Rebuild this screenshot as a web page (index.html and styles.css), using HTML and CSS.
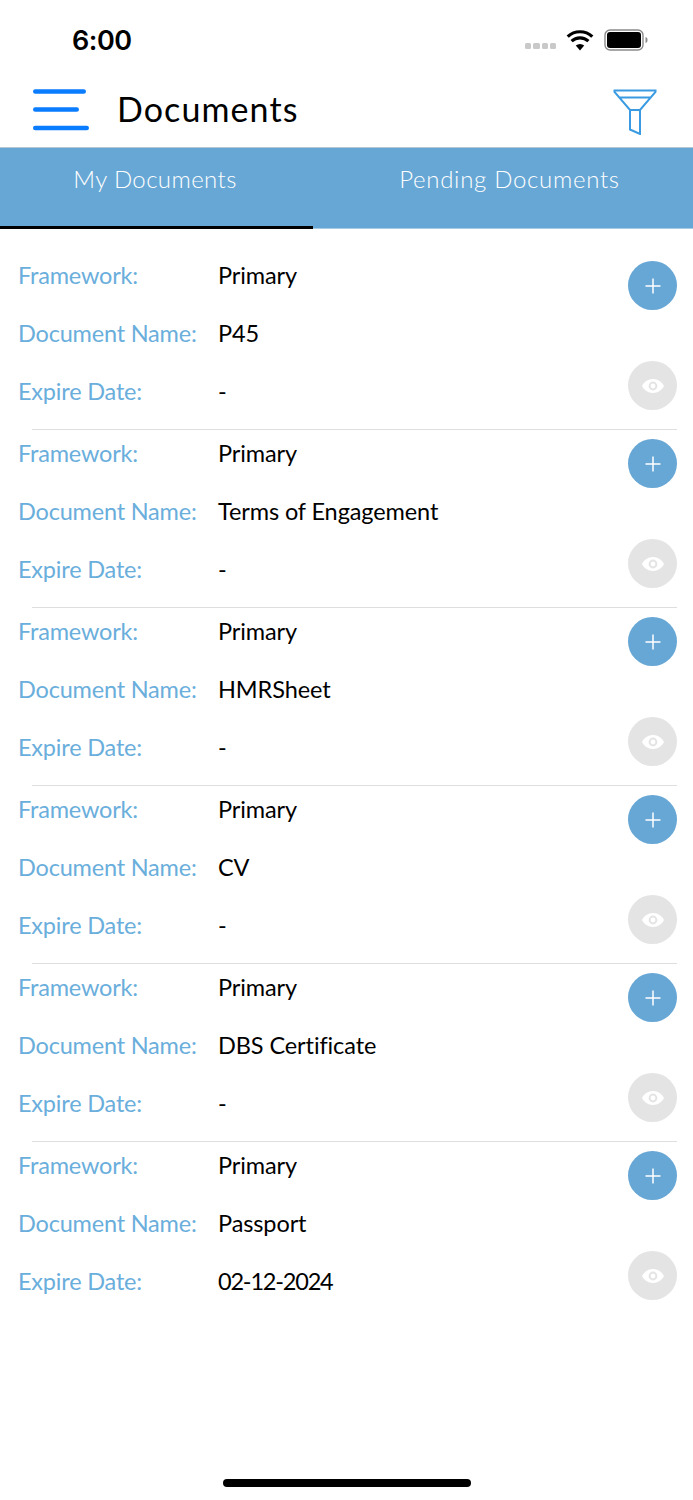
FILE: index.html
```html
<!DOCTYPE html>
<html lang="en">
<head>
<meta charset="utf-8">
<title>Documents</title>
<link rel="stylesheet" href="styles.css">
</head>
<body>
<div class="app">
  <div class="status">
    <span class="time">6:00</span>
    <div class="status-icons">
      <div class="dots"><i></i><i></i><i></i><i></i></div>
      <svg class="wifi" width="28" height="21" viewBox="0 0 28 21"><path d="M14 20.500 9.800 15.600a6.400 6.400 0 0 1 8.400 0z" fill="#000"/><path d="M5.600 11.200a12.200 12.200 0 0 1 16.800 0M1.700 6.600a18 18 0 0 1 24.600 0" fill="none" stroke="#000" stroke-width="3.200"/></svg>
      <svg class="battery" width="45" height="22" viewBox="0 0 45 22"><rect x="1" y="1" width="38" height="20" rx="5" fill="#fff" stroke="#8a8a8a" stroke-width="1.400"/><rect x="3" y="3" width="34" height="16" rx="3" fill="#000"/><path d="M41.500 8c1.600.3 2 1.500 2 3s-.4 2.700-2 3z" fill="#8a8a8a"/></svg>
    </div>
  </div>
  <header class="topbar">
    <svg class="menu" width="58" height="48" viewBox="0 0 58 48"><g stroke="#0a7cff" stroke-width="4.600" stroke-linecap="round"><path d="M3.300 5.500h48.400M3.300 23.500h41.400M3.300 42h51.400"/></g></svg>
    <h1 class="title">Documents</h1>
    <svg class="filter" width="44" height="46" viewBox="0 0 44 46"><g fill="none" stroke="#3a9be2" stroke-width="2"><path d="M1.500 1.500h41V3L27 21H17L1.500 3zM6.500 8.500h31M17 21v19.500L27 45V21"/></g></svg>
  </header>
  <nav class="tabs">
    <div class="tab tab-active">My Documents</div>
    <div class="tab tab-other">Pending Documents</div>
  </nav>
  <main class="list">
    <section class="record">
      <div class="fields">
        <div class="row"><span class="label">Framework:</span><span class="value">Primary</span></div>
        <div class="row"><span class="label">Document Name:</span><span class="value">P45</span></div>
        <div class="row"><span class="label">Expire Date:</span><span class="value">-</span></div>
      </div>
      <div class="actions">
        <div class="btn btn-add"><svg width="18" height="18" viewBox="0 0 18 18"><path d="M9 1.500v15M1.500 9h15" stroke="#fff" stroke-width="1.500"/></svg></div>
        <div class="btn btn-view"><svg width="24" height="16" viewBox="0 0 24 16"><path fill-rule="evenodd" d="M12 1c5 0 9 3.200 11 7-2 3.800-6 7-11 7S3 11.800 1 8c2-3.800 6-7 11-7zm0 2.600a4.400 4.400 0 1 0 0 8.800 4.400 4.400 0 0 0 0-8.800zm0 2a2.400 2.400 0 1 1 0 4.800 2.400 2.400 0 0 1 0-4.800z" fill="#fff"/></svg></div>
      </div>
    </section>
    <section class="record">
      <div class="fields">
        <div class="row"><span class="label">Framework:</span><span class="value">Primary</span></div>
        <div class="row"><span class="label">Document Name:</span><span class="value">Terms of Engagement</span></div>
        <div class="row"><span class="label">Expire Date:</span><span class="value">-</span></div>
      </div>
      <div class="actions">
        <div class="btn btn-add"><svg width="18" height="18" viewBox="0 0 18 18"><path d="M9 1.500v15M1.500 9h15" stroke="#fff" stroke-width="1.500"/></svg></div>
        <div class="btn btn-view"><svg width="24" height="16" viewBox="0 0 24 16"><path fill-rule="evenodd" d="M12 1c5 0 9 3.200 11 7-2 3.800-6 7-11 7S3 11.800 1 8c2-3.800 6-7 11-7zm0 2.600a4.400 4.400 0 1 0 0 8.800 4.400 4.400 0 0 0 0-8.800zm0 2a2.400 2.400 0 1 1 0 4.800 2.400 2.400 0 0 1 0-4.800z" fill="#fff"/></svg></div>
      </div>
    </section>
    <section class="record">
      <div class="fields">
        <div class="row"><span class="label">Framework:</span><span class="value">Primary</span></div>
        <div class="row"><span class="label">Document Name:</span><span class="value">HMRSheet</span></div>
        <div class="row"><span class="label">Expire Date:</span><span class="value">-</span></div>
      </div>
      <div class="actions">
        <div class="btn btn-add"><svg width="18" height="18" viewBox="0 0 18 18"><path d="M9 1.500v15M1.500 9h15" stroke="#fff" stroke-width="1.500"/></svg></div>
        <div class="btn btn-view"><svg width="24" height="16" viewBox="0 0 24 16"><path fill-rule="evenodd" d="M12 1c5 0 9 3.200 11 7-2 3.800-6 7-11 7S3 11.800 1 8c2-3.800 6-7 11-7zm0 2.600a4.400 4.400 0 1 0 0 8.800 4.400 4.400 0 0 0 0-8.800zm0 2a2.400 2.400 0 1 1 0 4.800 2.400 2.400 0 0 1 0-4.800z" fill="#fff"/></svg></div>
      </div>
    </section>
    <section class="record">
      <div class="fields">
        <div class="row"><span class="label">Framework:</span><span class="value">Primary</span></div>
        <div class="row"><span class="label">Document Name:</span><span class="value">CV</span></div>
        <div class="row"><span class="label">Expire Date:</span><span class="value">-</span></div>
      </div>
      <div class="actions">
        <div class="btn btn-add"><svg width="18" height="18" viewBox="0 0 18 18"><path d="M9 1.500v15M1.500 9h15" stroke="#fff" stroke-width="1.500"/></svg></div>
        <div class="btn btn-view"><svg width="24" height="16" viewBox="0 0 24 16"><path fill-rule="evenodd" d="M12 1c5 0 9 3.200 11 7-2 3.800-6 7-11 7S3 11.800 1 8c2-3.800 6-7 11-7zm0 2.600a4.400 4.400 0 1 0 0 8.800 4.400 4.400 0 0 0 0-8.800zm0 2a2.400 2.400 0 1 1 0 4.800 2.400 2.400 0 0 1 0-4.800z" fill="#fff"/></svg></div>
      </div>
    </section>
    <section class="record">
      <div class="fields">
        <div class="row"><span class="label">Framework:</span><span class="value">Primary</span></div>
        <div class="row"><span class="label">Document Name:</span><span class="value">DBS Certificate</span></div>
        <div class="row"><span class="label">Expire Date:</span><span class="value">-</span></div>
      </div>
      <div class="actions">
        <div class="btn btn-add"><svg width="18" height="18" viewBox="0 0 18 18"><path d="M9 1.500v15M1.500 9h15" stroke="#fff" stroke-width="1.500"/></svg></div>
        <div class="btn btn-view"><svg width="24" height="16" viewBox="0 0 24 16"><path fill-rule="evenodd" d="M12 1c5 0 9 3.200 11 7-2 3.800-6 7-11 7S3 11.800 1 8c2-3.800 6-7 11-7zm0 2.600a4.400 4.400 0 1 0 0 8.800 4.400 4.400 0 0 0 0-8.800zm0 2a2.400 2.400 0 1 1 0 4.800 2.400 2.400 0 0 1 0-4.800z" fill="#fff"/></svg></div>
      </div>
    </section>
    <section class="record">
      <div class="fields">
        <div class="row"><span class="label">Framework:</span><span class="value">Primary</span></div>
        <div class="row"><span class="label">Document Name:</span><span class="value">Passport</span></div>
        <div class="row"><span class="label">Expire Date:</span><span class="value value-date">02-12-2024</span></div>
      </div>
      <div class="actions">
        <div class="btn btn-add"><svg width="18" height="18" viewBox="0 0 18 18"><path d="M9 1.500v15M1.500 9h15" stroke="#fff" stroke-width="1.500"/></svg></div>
        <div class="btn btn-view"><svg width="24" height="16" viewBox="0 0 24 16"><path fill-rule="evenodd" d="M12 1c5 0 9 3.200 11 7-2 3.800-6 7-11 7S3 11.800 1 8c2-3.800 6-7 11-7zm0 2.600a4.400 4.400 0 1 0 0 8.800 4.400 4.400 0 0 0 0-8.800zm0 2a2.400 2.400 0 1 1 0 4.800 2.400 2.400 0 0 1 0-4.800z" fill="#fff"/></svg></div>
      </div>
    </section>
  </main>
  <div class="home-indicator"></div>
</div>
</body>
</html>
```

FILE: styles.css
```css
* { box-sizing: border-box; }
html, body { margin: 0; padding: 0; background: #fff; }
body { font-family: "Lato", "Open Sans", sans-serif; color: #000; }
.app { position: relative; width: 693px; height: 1500px; overflow: hidden; background: #fff; }

.status { height: 72px; display: flex; justify-content: space-between; padding: 25px 0 0 72px; }
.time { font-family: "Inter", "Liberation Sans", sans-serif; font-size: 27px; font-weight: 600; line-height: 32px; letter-spacing: -0.5px; }
.status-icons { display: flex; align-items: flex-start; padding-top: 4px; padding-right: 44px; }
.dots { display: flex; gap: 2px; margin-top: 14px; margin-right: 10px; }
.dots i { display: block; width: 6.250px; height: 5.500px; border-radius: 1.500px; background: #c9c9c9; }
.wifi { margin-right: 10px; margin-top: 1px; }
.battery { margin-top: 0; }

.topbar { height: 76px; display: flex; align-items: center; padding: 0 36px 0 32px; border-bottom: 1px solid #b5c5d2; }
.title { flex: 1; margin: -2px 0 0 27px; font-size: 34px; font-weight: 400; line-height: 40px; letter-spacing: 1.1px; }
.filter { margin-top: 4px; }

.tabs { height: 81px; display: flex; background: #67a7d5; border-bottom: 1px solid #a9cce6; }
.tab { font-size: 24px; font-weight: 300; line-height: 30px; color: #fff; padding-top: 16px; text-align: center; letter-spacing: 0.4px; }
.tab-active { width: 313px; height: 81px; border-bottom: 3px solid #000; padding-right: 3px; }
.tab-other { flex: 1; padding-left: 13px; letter-spacing: 0.7px; }

.list { padding-top: 22px; }
.record { position: relative; height: 178px; display: flex; justify-content: space-between; padding: 0 16px 0 18px; }
.record + .record::before { content: ""; position: absolute; left: 32px; right: 16px; top: 0; height: 1px; background: #dedede; }
.fields { margin-top: -5px; }
.row { height: 58px; display: flex; align-items: center; font-size: 23.500px; }
.label { width: 200px; color: #6aaedc; font-weight: 400; letter-spacing: -0.2px; }
.value { color: #000; font-weight: 400; letter-spacing: -0.1px; }
.value-date { letter-spacing: -1.200px; }
.actions { display: flex; flex-direction: column; padding-top: 10px; gap: 51px; }
.btn { width: 49px; height: 49px; border-radius: 50%; display: flex; align-items: center; justify-content: center; }
.btn-add { background: #67a7d5; }
.btn-view { background: #e4e4e4; }

.home-indicator { position: absolute; left: 223px; top: 1479px; width: 248px; height: 8px; border-radius: 4px; background: #000; }
```
